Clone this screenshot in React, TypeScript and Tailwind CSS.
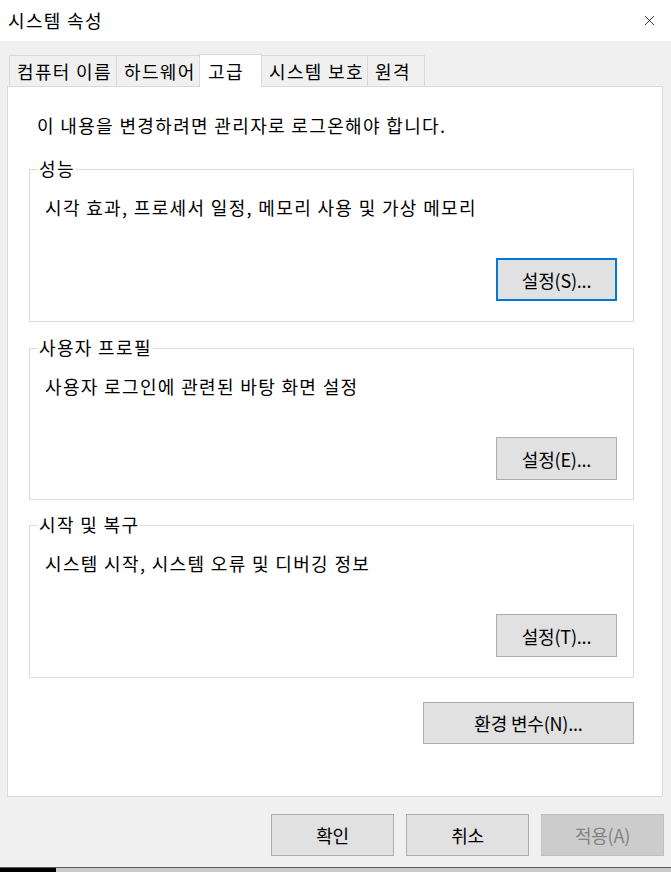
import { X } from "lucide-react";

const font = "font-['Noto_Sans_CJK_KR','Noto_Sans',sans-serif]";
// Malgun Gothic runs a bit wider than Noto CJK, so Korean labels get some tracking
const kr = "text-[18px] tracking-[1.35px]";

const tabs = [
  { label: "컴퓨터 이름", w: "w-[108px]" },
  { label: "하드웨어", w: "w-[84px]" },
  { label: "고급", w: "w-[63px]", active: true },
  { label: "시스템 보호", w: "w-[107px]" },
  { label: "원격", w: "w-[58px]" },
];

const groups = [
  {
    title: "성능",
    desc: "시각 효과, 프로세서 일정, 메모리 사용 및 가상 메모리",
    button: "설정(S)...",
    focused: true,
    h: "h-[153px]",
    mt: "mt-[32px]",
  },
  {
    title: "사용자 프로필",
    desc: "사용자 로그인에 관련된 바탕 화면 설정",
    button: "설정(E)...",
    h: "h-[152px]",
    mt: "mt-[26px]",
  },
  {
    title: "시작 및 복구",
    desc: "시스템 시작, 시스템 오류 및 디버깅 정보",
    button: "설정(T)...",
    h: "h-[153px]",
    mt: "mt-[25px]",
  },
];

function WinButton({
  label,
  className = "",
  focused = false,
  disabled = false,
}: {
  label: string;
  className?: string;
  focused?: boolean;
  disabled?: boolean;
}) {
  const look = disabled
    ? "bg-[#cccccc] border border-[#bfbfbf] text-[#838383]"
    : focused
    ? "bg-[#e1e1e1] border-2 border-[#0078d7] text-black"
    : "bg-[#e1e1e1] border border-[#adadad] text-black";
  return (
    <button
      disabled={disabled}
      className={`flex items-center justify-center text-[18px] leading-none tracking-[-0.2px] ${look} ${className}`}
    >
      {label}
    </button>
  );
}

export default function App() {
  return (
    <div className={`w-[671px] h-[872px] flex flex-col bg-[#f0f0f0] text-black ${font}`}>
      {/* Title bar */}
      <div className="h-[41px] bg-white flex items-center justify-between pl-[8px] pr-[13px] pb-px">
        <span className={`${kr} leading-none`}>시스템 속성</span>
        <X className="w-[17px] h-[17px] text-black" strokeWidth={1.1} />
      </div>

      {/* Tabs */}
      <div className="flex items-end pl-[9px] mt-[13px] h-[32px]">
        {tabs.map((t) =>
          t.active ? (
            <div
              key={t.label}
              className={`${t.w} h-[33px] -mb-px -ml-px relative z-10 bg-white border border-b-0 border-[#d9d9d9] flex items-center pl-[8px] pb-px ${kr} leading-none whitespace-nowrap`}
            >
              {t.label}
            </div>
          ) : (
            <div
              key={t.label}
              className={`${t.w} h-[31px] -ml-px first:ml-0 bg-[#f0f0f0] border border-b-0 border-[#d9d9d9] flex items-center pl-[7px] pb-px ${kr} leading-none whitespace-nowrap`}
            >
              {t.label}
            </div>
          )
        )}
      </div>

      {/* Panel */}
      <div className="ml-[7px] w-[656px] h-[711px] bg-white border border-[#d9d9d9] flex flex-col pl-[21px]">
        <p className={`mt-[26px] pl-[8px] ${kr} leading-[24px]`}>
          이 내용을 변경하려면 관리자로 로그온해야 합니다.
        </p>

        {groups.map((g) => (
          <div
            key={g.title}
            className={`relative ${g.mt} ${g.h} w-[605px] border border-[#dcdcdc] flex flex-col pt-[25px] pl-[15px] pr-[16px]`}
          >
            <span className={`absolute -top-[14px] left-[8px] bg-white px-[1px] ${kr} leading-[24px]`}>
              {g.title}
            </span>
            <p className={`${kr} leading-[24px]`}>{g.desc}</p>
            <WinButton
              label={g.button}
              focused={g.focused}
              className="self-end mt-[39px] w-[121px] h-[43px]"
            />
          </div>
        ))}

        <WinButton
          label="환경 변수(N)..."
          className="self-end mr-[28px] mt-[24px] w-[211px] h-[42px]"
        />
      </div>

      {/* Dialog buttons */}
      <div className="flex justify-end gap-[12px] pr-[7px] mt-[17px]">
        <WinButton label="확인" className="w-[123px] h-[42px]" />
        <WinButton label="취소" className="w-[123px] h-[42px]" />
        <WinButton label="적용(A)" disabled className="w-[123px] h-[42px]" />
      </div>

      {/* Bottom edge */}
      <div className="mt-auto h-px bg-[#5a5a5a]" />
      <div className="h-[4px] flex">
        <div className="w-[56px] bg-black" />
        <div className="flex-1 bg-[#c9c9c9]" />
      </div>
    </div>
  );
}
